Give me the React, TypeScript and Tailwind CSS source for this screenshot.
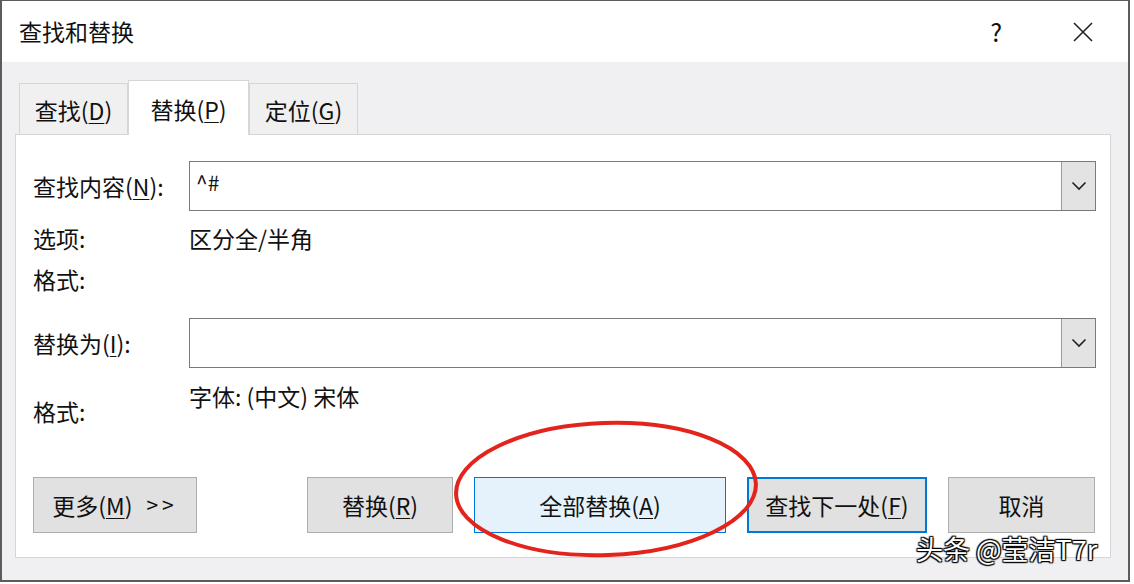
import { ReactNode } from "react";

function Key({ children }: { children: ReactNode }) {
  return <span className="underline underline-offset-[3px] decoration-1">{children}</span>;
}

function Chevron() {
  return (
    <svg width="16" height="10" viewBox="0 0 16 10" fill="none">
      <path d="M1.5 1.5 L8 8 L14.5 1.5" stroke="#222" strokeWidth="1.6" />
    </svg>
  );
}

function ComboBox({ value }: { value?: string }) {
  return (
    <div className="w-[907px] h-[50px] border border-[#7a7a7a] bg-white flex">
      <div className="flex-1 pl-[6px] pt-[5px] text-[21px] leading-[30px] text-[#111]">{value}</div>
      <div className="w-[34px] h-full bg-[#e3e3e3] border-l border-[#9a9a9a] flex items-center justify-center">
        <Chevron />
      </div>
    </div>
  );
}

function Tab({ active, children }: { active?: boolean; children: ReactNode }) {
  return (
    <div
      className={
        active
          ? "relative z-10 w-[121px] h-[55px] -mb-px bg-white border border-b-0 border-[#d6d6d6] flex items-center justify-center pt-[2px]"
          : "w-[109px] h-[51px] bg-[#f0f0f0] border border-b-0 border-[#d6d6d6] flex items-center justify-center pt-[2px]"
      }
    >
      {children}
    </div>
  );
}

function Button({ w, variant, children }: { w: string; variant?: "all" | "focus"; children: ReactNode }) {
  const base = "h-[56px] flex items-center justify-center text-[23px] text-[#111] ";
  let look = "bg-[#e1e1e1] border border-[#adadad] ";
  if (variant === "all") look = "bg-[#e5f1fb] border border-[#0078d7] ";
  if (variant === "focus") look = "bg-[#e1e1e1] border-2 border-[#0078d7] ";
  return <div className={base + look + w}>{children}</div>;
}

export default function App() {
  return (
    <div className="w-[1134px] h-[584px] bg-white relative overflow-hidden font-['Noto_Sans_CJK_SC','Noto_Sans',sans-serif] text-[#111]">
      <div className="w-[1130px] h-[582px] border-l-2 border-t border-r-2 border-b-2 border-[#5c5c5c] flex flex-col bg-[#f0f0f2]">
        {/* title bar */}
        <div className="h-[61px] bg-white flex items-center pl-[17px] pr-[34px]">
          <span className="text-[23px]">查找和替换</span>
          <span className="ml-auto text-[25px] leading-none mr-[70px]">?</span>
          <svg width="22" height="22" viewBox="0 0 22 22">
            <path d="M2 2 L20 20 M20 2 L2 20" stroke="#222" strokeWidth="1.6" />
          </svg>
        </div>

        <div className="flex-1 pl-[13px] pt-[18px]">
          {/* tabs */}
          <div className="flex items-end pl-[4px] text-[23px]">
            <Tab>
              查找(<Key>D</Key>)
            </Tab>
            <Tab active>
              替换(<Key>P</Key>)
            </Tab>
            <Tab>
              定位(<Key>G</Key>)
            </Tab>
          </div>

          {/* panel */}
          <div className="w-[1096px] h-[424px] bg-white border border-[#d6d6d6] pl-[17px] pt-[26px] text-[23px]">
            <div className="flex items-center h-[50px]">
              <div className="w-[156px]">
                查找内容(<Key>N</Key>):
              </div>
              <ComboBox value="^#" />
            </div>
            <div className="flex items-center h-[30px] mt-[12px]">
              <div className="w-[156px]">选项:</div>
              <div>区分全/半角</div>
            </div>
            <div className="flex items-center h-[30px] mt-[11px]">
              <div className="w-[156px]">格式:</div>
            </div>
            <div className="flex items-center h-[50px] mt-[24px]">
              <div className="w-[156px]">
                替换为(<Key>I</Key>):
              </div>
              <ComboBox />
            </div>
            <div className="flex items-start">
              <div className="w-[156px] mt-[28px] leading-[30px]">格式:</div>
              <div className="mt-[13px] leading-[30px]">字体: (中文) 宋体</div>
            </div>

            <div className="flex mt-[51px]">
              <Button w="w-[164px]">
                更多(<Key>M</Key>)<span className="ml-[14px] tracking-[4px] text-[21px]">&gt;&gt;</span>
              </Button>
              <div className="ml-[110px] flex gap-[21px]">
                <Button w="w-[146px]">
                  替换(<Key>R</Key>)
                </Button>
                <Button w="w-[252px]" variant="all">
                  全部替换(<Key>A</Key>)
                </Button>
                <Button w="w-[180px]" variant="focus">
                  查找下一处(<Key>F</Key>)
                </Button>
                <Button w="w-[147px]">取消</Button>
              </div>
            </div>
          </div>
        </div>
      </div>

      {/* red annotation ellipse */}
      <svg className="absolute left-[448px] top-[416px]" width="320" height="148" viewBox="0 0 320 148">
        <ellipse
          cx="158"
          cy="73"
          rx="150"
          ry="66"
          fill="none"
          stroke="#e3241c"
          strokeWidth="4"
          transform="rotate(-2 158 73)"
        />
      </svg>

      {/* watermark */}
      <div className="absolute left-[916px] top-[531px] text-[27px] leading-[36px] text-white [text-shadow:0_0_2px_#000,1px_1px_1px_#000,-1px_-1px_1px_#000,1px_-1px_1px_#000,-1px_1px_1px_#000]">
        头条 @莹洁T7r
      </div>
    </div>
  );
}
